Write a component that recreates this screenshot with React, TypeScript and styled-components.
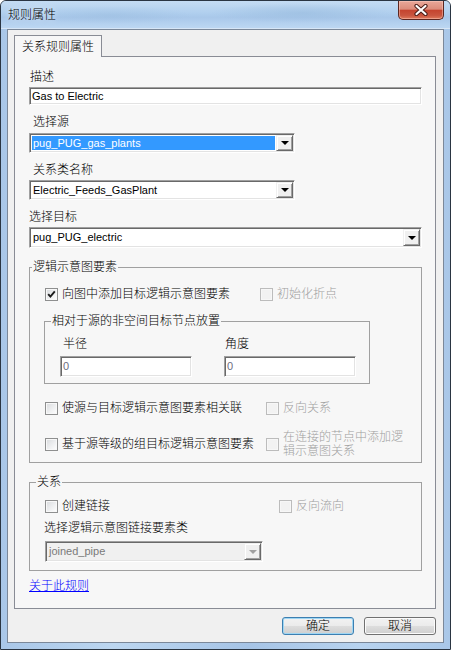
import React from 'react';
import styled, { createGlobalStyle } from 'styled-components';

const GlobalStyle = createGlobalStyle`
  html, body {
    margin: 0;
    padding: 0;
    background: #ffffff;
  }
  body {
    font-family: "Liberation Sans", "Noto Sans CJK SC", sans-serif;
    font-size: 12px;
    font-weight: 300;
    color: #000;
  }
  * {
    box-sizing: border-box;
  }
`;

const Window = styled.div`
  width: 451px;
  height: 650px;
  display: flex;
  flex-direction: column;
  border: 1px solid #2a3542;
  border-radius: 6px 6px 0 0;
  overflow: hidden;
  background: linear-gradient(90deg, #a9c7e8 0%, #bcd6f0 25%, #a6c4e6 55%, #b8d3ef 80%, #a9c7e8 100%);
`;

const TitleBar = styled.div`
  height: 28px;
  flex: none;
  display: flex;
  justify-content: space-between;
  align-items: flex-start;
  padding: 0 6px 0 7px;
  background:
    radial-gradient(ellipse 90px 10px at 300px 12px, rgba(150, 185, 220, 0.55), transparent),
    radial-gradient(ellipse 80px 9px at 110px 14px, rgba(150, 185, 220, 0.4), transparent),
    linear-gradient(180deg, #c4dcf3 0%, #b0cfee 45%, #a9c8ea 60%, #bcd7f2 100%);
  border-bottom: 1px solid #d7e6f6;
`;

const Title = styled.span`
  padding-top: 6px;
  line-height: 16px;
  font-size: 12px;
  text-shadow: 0 0 6px rgba(255, 255, 255, 0.9);
`;

const CloseButton = styled.div`
  width: 46px;
  height: 19px;
  display: flex;
  align-items: center;
  justify-content: center;
  border: 1px solid #5b2620;
  border-top: none;
  border-radius: 0 0 5px 5px;
  background: linear-gradient(180deg, #e9a899 0%, #dc8c7b 45%, #c5442f 52%, #c9553f 80%, #e07a5c 100%);
  box-shadow: inset 0 0 0 1px rgba(255, 210, 200, 0.45);
`;

const ClientFrame = styled.div`
  flex: 1;
  display: flex;
  padding: 0 6px 6px 6px;
`;

const Client = styled.div`
  flex: 1;
  display: flex;
  flex-direction: column;
  padding: 5px 7px 0 6px;
  background: #f0f0f0;
  border: 1px solid #7b8899;
`;

const TabStrip = styled.div`
  display: flex;
`;

const Tab = styled.div`
  position: relative;
  z-index: 1;
  width: 88px;
  height: 22px;
  margin-bottom: -1px;
  padding-top: 4px;
  text-align: center;
  line-height: 14px;
  background: #f7f7f7;
  border: 1px solid #898c95;
  border-bottom: none;
`;

const TabPanel = styled.div`
  height: 553px;
  display: flex;
  flex-direction: column;
  align-items: flex-start;
  padding: 13px 13px 0 14px;
  background: #f7f7f7;
  border: 1px solid #898c95;
`;

const FieldLabel = styled.div<{ $top: number; $indent?: number }>`
  margin-top: ${p => p.$top}px;
  padding-left: ${p => p.$indent ?? 0}px;
  line-height: 14px;
  height: 14px;
`;

const sunken = `
  border-style: solid;
  border-width: 1px;
  border-color: #a0a0a0 #ffffff #ffffff #a0a0a0;
  box-shadow: inset 1px 1px 0 #696969, inset -1px -1px 0 #e3e3e3;
`;

const TextBox = styled.div<{ $top: number }>`
  ${sunken}
  margin-top: ${p => p.$top}px;
  width: 100%;
  height: 18px;
  padding: 1px 2px;
  background: #fff;
  font-size: 11px;
  line-height: 14px;
`;

const ComboBox = styled.div<{ $top: number; $width: number; $height?: number; $disabled?: boolean }>`
  ${sunken}
  margin-top: ${p => p.$top}px;
  width: ${p => p.$width}px;
  height: ${p => p.$height ?? 20}px;
  display: flex;
  padding: 1px;
  background: ${p => (p.$disabled ? '#f0f0f0' : '#ffffff')};
`;

const ComboValue = styled.div<{ $selected?: boolean; $disabled?: boolean }>`
  flex: 1;
  margin: 1px;
  padding-left: 1px;
  font-size: 11px;
  line-height: 14px;
  background: ${p => (p.$selected ? '#3399ff' : 'transparent')};
  color: ${p => (p.$selected ? '#ffffff' : p.$disabled ? '#7a7a7a' : '#000000')};
`;

const DropButton = styled.div<{ $disabled?: boolean }>`
  width: 17px;
  flex: none;
  display: flex;
  align-items: center;
  justify-content: center;
  background: #f0f0f0;
  border-style: solid;
  border-width: 1px;
  border-color: #f0f0f0 #696969 #696969 #f0f0f0;
  box-shadow: inset 1px 1px 0 #ffffff, inset -1px -1px 0 #a0a0a0;

  &::after {
    content: '';
    border-left: 4px solid transparent;
    border-right: 4px solid transparent;
    border-top: 4px solid ${p => (p.$disabled ? '#a0a0a0' : '#000000')};
  }
`;

const GroupBox = styled.fieldset<{ $top: number; $inner?: boolean }>`
  margin: ${p => p.$top}px 0 0 ${p => (p.$inner ? -1 : 0)}px;
  width: ${p => (p.$inner ? '326px' : '100%')};
  min-width: 0;
  padding: 0;
  border: 1px solid #a0a0a0;
  border-radius: 0;
`;

const GroupLegend = styled.legend<{ $offset: number }>`
  margin-left: ${p => p.$offset}px;
  padding: 0 1px;
  line-height: 14px;
`;

const GroupBody = styled.div<{ $top: number; $bottom: number }>`
  padding: ${p => p.$top}px 0 ${p => p.$bottom}px 15px;
`;

const CheckRow = styled.div<{ $split: number; $top?: number }>`
  display: grid;
  grid-template-columns: ${p => p.$split}px 1fr;
  align-items: center;
  margin-top: ${p => p.$top ?? 0}px;
`;

const CheckItem = styled.label<{ $disabled?: boolean }>`
  display: flex;
  align-items: center;
  gap: 4px;
  line-height: 14px;
  color: ${p => (p.$disabled ? '#a0a0a0' : '#000000')};
`;

const CheckBox = styled.span<{ $disabled?: boolean }>`
  width: 13px;
  height: 13px;
  flex: none;
  display: flex;
  align-items: center;
  justify-content: center;
  border: 1px solid ${p => (p.$disabled ? '#bcbcbc' : '#8e8f8f')};
  background: ${p =>
    p.$disabled ? '#f2f2f2' : 'linear-gradient(135deg, #d8dadd 0%, #f0f1f2 60%, #ffffff 100%)'};
  box-shadow: inset 0 0 0 1px ${p => (p.$disabled ? '#f7f7f7' : '#f8f8f8')};
`;

const FieldGrid = styled.div`
  display: grid;
  grid-template-columns: 164px 132px;
  padding: 9px 0 6px 0;
`;

const FieldColumn = styled.div`
  display: flex;
  flex-direction: column;
`;

const NumberBox = styled.div`
  ${sunken}
  margin-top: 5px;
  width: 132px;
  height: 21px;
  padding: 2px 2px;
  background: #ffffff;
  color: #6d6d80;
  font-size: 11px;
  line-height: 15px;
`;

const RuleLink = styled.a`
  margin-top: 8px;
  line-height: 15px;
  color: #0000ff;
  text-decoration: underline;
  cursor: pointer;
`;

const Footer = styled.div`
  display: flex;
  justify-content: flex-end;
  gap: 10px;
  margin-top: 8px;
`;

const Button = styled.button<{ $default?: boolean }>`
  width: 72px;
  height: 18px;
  padding: 0;
  font-family: inherit;
  font-size: 12px;
  font-weight: 300;
  line-height: 14px;
  color: #000;
  border: 1px solid ${p => (p.$default ? '#3c7fb1' : '#707070')};
  border-radius: 3px;
  background: linear-gradient(180deg, #f2f2f2 0%, #ebebeb 50%, #dddddd 51%, #cfcfcf 100%);
  box-shadow: inset 0 0 0 1px ${p => (p.$default ? '#9fd6f3' : '#fbfbfb')};
`;

const Check = () => (
  <svg width="9" height="9" viewBox="0 0 9 9">
    <path d="M1.2 4.2 L3.4 6.6 L7.8 1.4" fill="none" stroke="#1b1b1b" strokeWidth="1.9" />
  </svg>
);

const CloseGlyph = () => (
  <svg width="16" height="12" viewBox="0 0 16 12">
    <path d="M3.5 2 L12.5 10 M12.5 2 L3.5 10" stroke="#4a1d17" strokeWidth="4.2" strokeLinecap="round" />
    <path d="M3.5 2 L12.5 10 M12.5 2 L3.5 10" stroke="#ffffff" strokeWidth="2.2" strokeLinecap="round" />
  </svg>
);

const Option = ({ text, checked, disabled }: { text: React.ReactNode; checked?: boolean; disabled?: boolean }) => (
  <CheckItem $disabled={disabled}>
    <CheckBox $disabled={disabled}>{checked && <Check />}</CheckBox>
    <span>{text}</span>
  </CheckItem>
);

const Combo = ({
  value, top, width, height, selected, disabled,
}: { value: string; top: number; width: number; height?: number; selected?: boolean; disabled?: boolean }) => (
  <ComboBox $top={top} $width={width} $height={height} $disabled={disabled}>
    <ComboValue $selected={selected} $disabled={disabled}>{value}</ComboValue>
    <DropButton $disabled={disabled} />
  </ComboBox>
);

export default function App() {
  return (
    <>
      <GlobalStyle />
      <Window>
        <TitleBar>
          <Title>规则属性</Title>
          <CloseButton>
            <CloseGlyph />
          </CloseButton>
        </TitleBar>
        <ClientFrame>
          <Client>
            <TabStrip>
              <Tab>关系规则属性</Tab>
            </TabStrip>
            <TabPanel>
              <FieldLabel $top={0} $indent={1}>描述</FieldLabel>
              <TextBox $top={3}>Gas to Electric</TextBox>

              <FieldLabel $top={10} $indent={4}>选择源</FieldLabel>
              <Combo value="pug_PUG_gas_plants" top={4} width={266} selected />

              <FieldLabel $top={10} $indent={4}>关系类名称</FieldLabel>
              <Combo value="Electric_Feeds_GasPlant" top={3} width={266} />

              <FieldLabel $top={10}>选择目标</FieldLabel>
              <Combo value="pug_PUG_electric" top={3} width={393} height={21} />

              <GroupBox $top={12}>
                <GroupLegend $offset={2}>逻辑示意图要素</GroupLegend>
                <GroupBody $top={13} $bottom={4}>
                  <CheckRow $split={215}>
                    <Option text="向图中添加目标逻辑示意图要素" checked />
                    <Option text="初始化折点" disabled />
                  </CheckRow>

                  <GroupBox $top={13} $inner>
                    <GroupLegend $offset={6}>相对于源的非空间目标节点放置</GroupLegend>
                    <GroupBody $top={0} $bottom={0}>
                      <FieldGrid>
                        <FieldColumn>
                          <FieldLabel $top={0} $indent={3}>半径</FieldLabel>
                          <NumberBox>0</NumberBox>
                        </FieldColumn>
                        <FieldColumn>
                          <FieldLabel $top={0} $indent={1}>角度</FieldLabel>
                          <NumberBox>0</NumberBox>
                        </FieldColumn>
                      </FieldGrid>
                    </GroupBody>
                  </GroupBox>

                  <CheckRow $split={221} $top={17}>
                    <Option text="使源与目标逻辑示意图要素相关联" />
                    <Option text="反向关系" disabled />
                  </CheckRow>

                  <CheckRow $split={221} $top={15}>
                    <Option text="基于源等级的组目标逻辑示意图要素" />
                    <Option text={<>在连接的节点中添加逻<br />辑示意图关系</>} disabled />
                  </CheckRow>
                </GroupBody>
              </GroupBox>

              <GroupBox $top={12}>
                <GroupLegend $offset={6}>关系</GroupLegend>
                <GroupBody $top={10} $bottom={8}>
                  <CheckRow $split={234}>
                    <Option text="创建链接" />
                    <Option text="反向流向" disabled />
                  </CheckRow>
                  <FieldLabel $top={8} $indent={0} style={{ marginLeft: -1 }}>选择逻辑示意图链接要素类</FieldLabel>
                  <Combo value="joined_pipe" top={6} width={218} height={21} disabled />
                </GroupBody>
              </GroupBox>

              <RuleLink>关于此规则</RuleLink>
            </TabPanel>
            <Footer>
              <Button $default>确定</Button>
              <Button>取消</Button>
            </Footer>
          </Client>
        </ClientFrame>
      </Window>
    </>
  );
}
